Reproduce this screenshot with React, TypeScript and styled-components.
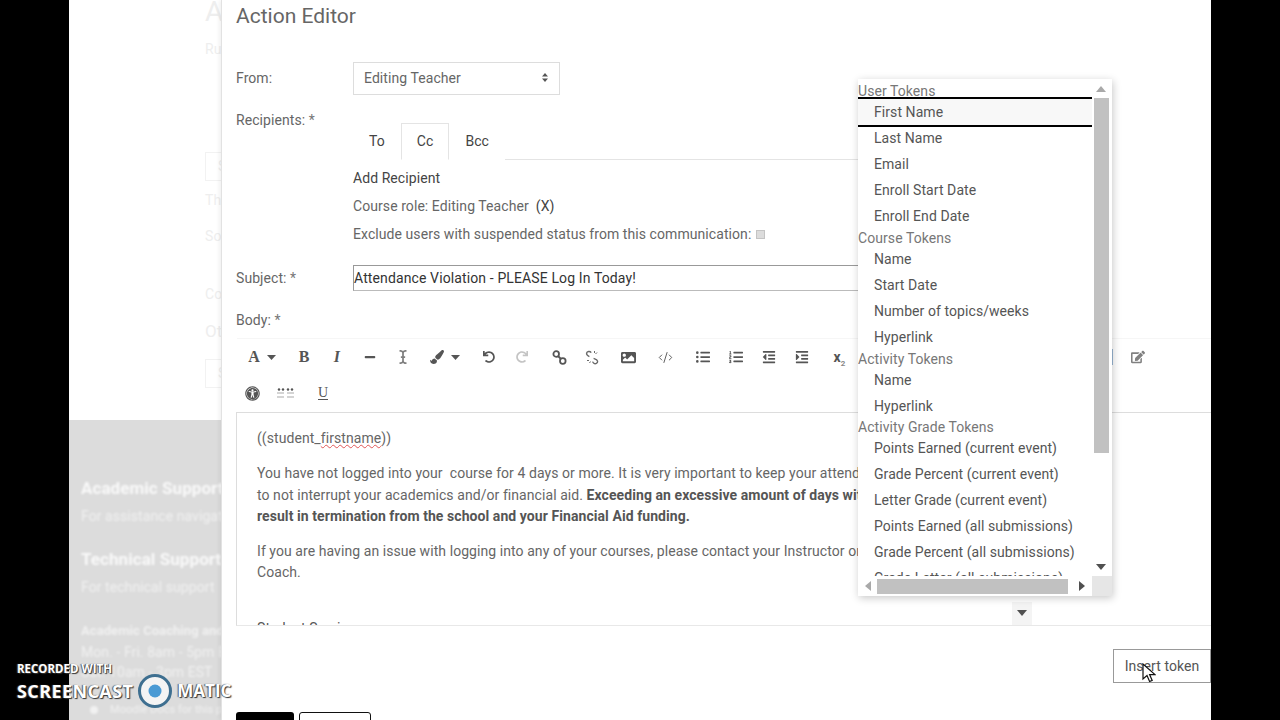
import React, { FC, ReactNode } from 'react';
import styled, { createGlobalStyle } from 'styled-components';
import {
  FaEdit,
  FaImage,
  FaIndent,
  FaListOl,
  FaListUl,
  FaMinus,
  FaOutdent,
  FaPaintBrush,
  FaRedo,
  FaUndo,
  FaUniversalAccess,
  FaICursor,
} from 'react-icons/fa';
import { CodeXml } from 'lucide-react';

type TokenGroup = {
  title: string;
  items: string[];
};

const tokenGroups: TokenGroup[] = [
  {
    title: 'User Tokens',
    items: ['First Name', 'Last Name', 'Email', 'Enroll Start Date', 'Enroll End Date'],
  },
  {
    title: 'Course Tokens',
    items: ['Name', 'Start Date', 'Number of topics/weeks', 'Hyperlink'],
  },
  { title: 'Activity Tokens', items: ['Name', 'Hyperlink'] },
  {
    title: 'Activity Grade Tokens',
    items: [
      'Points Earned (current event)',
      'Grade Percent (current event)',
      'Letter Grade (current event)',
      'Points Earned (all submissions)',
      'Grade Percent (all submissions)',
      'Grade Letter (all submissions)',
    ],
  },
];

const Caret: FC = () => (
  <svg width='9' height='5' viewBox='0 0 9 5'>
    <path d='M0 0h9L4.5 5z' fill='currentColor' />
  </svg>
);

const Arrow: FC<{ dir: 'up' | 'down' | 'left' | 'right'; color?: string }> = ({
  dir,
  color = '#505050',
}) => {
  const paths = {
    up: 'M5 2l5 6H0z',
    down: 'M0 2h10L5 8z',
    left: 'M8 0v10L2 5z',
    right: 'M2 0v10l6-5z',
  };
  return (
    <svg width='10' height='10' viewBox='0 0 10 10'>
      <path d={paths[dir]} fill={color} />
    </svg>
  );
};

// the "show more" grid button, dark dots over two faded columns
const DotsIcon: FC = () => (
  <svg width='17' height='11' viewBox='0 0 17 11'>
    <g fill='#555'>
      <circle cx='2' cy='1.5' r='1.2' />
      <circle cx='6' cy='1.5' r='1.2' />
      <circle cx='11' cy='1.5' r='1.2' />
      <circle cx='15' cy='1.5' r='1.2' />
    </g>
    <g fill='#d4d4d4'>
      <rect x='0' y='4' width='7' height='2' />
      <rect x='0' y='8' width='7' height='2' />
      <rect x='10' y='4' width='7' height='2' />
      <rect x='10' y='8' width='7' height='2' />
    </g>
  </svg>
);

const LinkIcon: FC = () => (
  <svg width='15' height='15' viewBox='0 0 15 15' fill='none' stroke='currentColor' strokeWidth='1.8'>
    <circle cx='4.2' cy='4' r='2.8' />
    <circle cx='10.8' cy='11' r='2.8' />
    <path d='M6 6l3 3' />
  </svg>
);

const UnlinkIcon: FC = () => (
  <svg width='15' height='15' viewBox='0 0 15 15' fill='none' stroke='#6a6a6a' strokeWidth='1.4'>
    <path d='M6.2 2.6C5 .8 2 1.2 1.6 3.2 1.3 5 3 6 4.4 6.6' />
    <path d='M8.6 8.4c1.4.5 3.6 1 4 2.8.3 2-2.2 3.2-3.8 2-.6-.4-1-1-1.2-1.6' />
    <path d='M9.5 1v2M12 2.5l-1.5 1.5M2 10.5h2M4.5 13l1-1.5' strokeWidth='1' />
  </svg>
);

const Tool: FC<{ wide?: boolean; children: ReactNode }> = ({ wide, children }) => (
  <ToolButton $wide={wide}>{children}</ToolButton>
);

const Toolbar: FC = () => (
  <ToolbarWrap>
    <ToolRow>
      <ToolGroup>
        <Tool wide>
          <SerifGlyph>A</SerifGlyph>
          <Caret />
        </Tool>
      </ToolGroup>
      <ToolGroup>
        <Tool>
          <SerifGlyph>B</SerifGlyph>
        </Tool>
        <Tool>
          <SerifGlyph $italic>I</SerifGlyph>
        </Tool>
        <Tool>
          <FaMinus size={12} />
        </Tool>
        <Tool>
          <MutedIcon>
            <FaICursor size={14} />
          </MutedIcon>
        </Tool>
      </ToolGroup>
      <ToolGroup>
        <Tool wide>
          <FaPaintBrush size={14} />
          <Caret />
        </Tool>
      </ToolGroup>
      <ToolGroup $nudge={2}>
        <Tool>
          <FaUndo size={12} />
        </Tool>
        <Tool>
          <FaintIcon>
            <FaRedo size={12} />
          </FaintIcon>
        </Tool>
      </ToolGroup>
      <ToolGroup>
        <Tool>
          <LinkIcon />
        </Tool>
        <Tool>
          <UnlinkIcon />
        </Tool>
      </ToolGroup>
      <ToolGroup $nudge={-2}>
        <Tool>
          <FaImage size={15} />
        </Tool>
      </ToolGroup>
      <ToolGroup>
        <Tool>
          <CodeXml size={15} strokeWidth={1.5} />
        </Tool>
      </ToolGroup>
      <ToolGroup>
        <Tool>
          <FaListUl size={14} />
        </Tool>
        <Tool>
          <FaListOl size={14} />
        </Tool>
        <Tool>
          <FaOutdent size={14} />
        </Tool>
        <Tool>
          <FaIndent size={14} />
        </Tool>
      </ToolGroup>
      <ToolGroup>
        <Tool>
          <SubGlyph>
            x<sub>2</sub>
          </SubGlyph>
        </Tool>
      </ToolGroup>
      <EndGroup>
        <BlueBar />
        <Tool>
          <MutedIcon>
            <FaEdit size={14} />
          </MutedIcon>
        </Tool>
      </EndGroup>
    </ToolRow>
    <SecondToolRow>
      <ToolGroup>
        <Tool>
          <FaUniversalAccess size={15} />
        </Tool>
        <Tool>
          <DotsIcon />
        </Tool>
      </ToolGroup>
      <ToolGroup>
        <Tool>
          <UnderlinedGlyph>U</UnderlinedGlyph>
        </Tool>
      </ToolGroup>
    </SecondToolRow>
  </ToolbarWrap>
);

const TokenMenu: FC = () => (
  <Menu>
    <MenuList>
      {tokenGroups.map((group) => (
        <TokenSection key={group.title}>
          <GroupTitle>{group.title}</GroupTitle>
          {group.items.map((item) => (
            <TokenItem key={item} $selected={item === 'First Name'}>
              {item}
            </TokenItem>
          ))}
        </TokenSection>
      ))}
    </MenuList>
    <VerticalBar>
      <BarButton>
        <Arrow dir='up' color='#a9a9a9' />
      </BarButton>
      <VerticalThumb />
      <BarSpacer />
      <BarButton>
        <Arrow dir='down' />
      </BarButton>
    </VerticalBar>
    <HorizontalBar>
      <BarButton>
        <Arrow dir='left' color='#a9a9a9' />
      </BarButton>
      <HorizontalThumb />
      <BarButton>
        <Arrow dir='right' />
      </BarButton>
    </HorizontalBar>
    <BarCorner />
  </Menu>
);

const Backdrop: FC = () => (
  <BackdropColumn>
    <BackdropPage>
      <GhostHeading>Action Rules</GhostHeading>
      <GhostText $top={13}>Rule settings</GhostText>
      <GhostBox $top={93}>Select</GhostBox>
      <GhostText $top={9}>This rule</GhostText>
      <GhostText $top={16}>Sort</GhostText>
      <GhostText $top={38}>Course</GhostText>
      <GhostText $top={17} $large>Other</GhostText>
      <GhostBox $top={18}>Save</GhostBox>
    </BackdropPage>
    <Footer>
      <FooterInner>
        <FooterHeading>Academic Support</FooterHeading>
        <FooterText $top={10}>For assistance navigating</FooterText>
        <FooterHeading $top={24}>Technical Support</FooterHeading>
        <FooterText $top={10}>For technical support</FooterText>
        <FooterSub>Academic Coaching and</FooterSub>
        <FooterText $top={5}>Mon. - Fri. 8am - 5pm EST</FooterText>
        <FooterText $top={3}>Sat. 10am - 3pm EST</FooterText>
        <FooterDocs>Moodle Docs for this page</FooterDocs>
      </FooterInner>
    </Footer>
  </BackdropColumn>
);

const App: FC = () => {
  return (
    <>
      <GlobalStyle />
      <Stage>
        <Backdrop />
        <Modal>
          <Title>Action Editor</Title>
          <FromRow>
            <FieldLabel $tall>From:</FieldLabel>
            <SelectBox>
              Editing Teacher
              <svg width='6' height='9' viewBox='0 0 6 9'>
                <path d='M3 0l3 3.5H0zM3 9L0 5.5h6z' fill='#555' />
              </svg>
            </SelectBox>
          </FromRow>
          <RecipientsRow>
            <FieldLabel>
              Recipients: <Req>*</Req>
            </FieldLabel>
            <div>
              <Tabs>
                <TabItem>To</TabItem>
                <TabItem $active>Cc</TabItem>
                <TabItem>Bcc</TabItem>
              </Tabs>
              <AddRecipient>Add Recipient</AddRecipient>
              <RecipientLine>
                Course role: Editing Teacher&nbsp; <RemoveMark>(X)</RemoveMark>
              </RecipientLine>
              <RecipientLine>
                Exclude users with suspended status from this communication: <TinyCheck />
              </RecipientLine>
            </div>
          </RecipientsRow>
          <SubjectRow>
            <FieldLabel $input>
              Subject: <Req>*</Req>
            </FieldLabel>
            <SubjectInput>Attendance Violation - PLEASE Log In Today!</SubjectInput>
          </SubjectRow>
          <BodyLabel>
            Body: <Req>*</Req>
          </BodyLabel>
          <Toolbar />
          <Editor>
            <EditorText>
              <p>
                ((student_<Misspelled>firstname</Misspelled>))
              </p>
              <p>
                You have not logged into your&nbsp; course for 4 days or more. It is very important to keep your attendance up
                <br />
                to not interrupt your academics and/or financial aid. <strong>Exceeding an excessive amount of days without</strong>
                <br />
                <strong>result in termination from the school and your Financial Aid funding.</strong>
              </p>
              <p>
                If you are having an issue with logging into any of your courses, please contact your Instructor or
                <br />
                Coach.
              </p>
              <ClippedLine>Student Services</ClippedLine>
            </EditorText>
            <EditorScroll>
              <Arrow dir='down' />
            </EditorScroll>
          </Editor>
          <InsertRow>
            <InsertButton>Insert token</InsertButton>
          </InsertRow>
          <ActionRow>
            <SaveButton>Save</SaveButton>
            <CancelButton>Cancel</CancelButton>
          </ActionRow>
          <TokenMenu />
        </Modal>
        <Pointer viewBox='0 0 14 20' width='14' height='20'>
          <path d='M1 1v15l4-3.5 2.6 6 2.6-1.1-2.6-5.8H13z' fill='#fff' stroke='#111' strokeWidth='1.2' />
        </Pointer>
        <Watermark>
          <RecordedWith>RECORDED WITH</RecordedWith>
          <Brand>
            SCREENCAST
            <svg width='36' height='36' viewBox='0 0 36 36'>
              <circle cx='18' cy='18' r='15.5' fill='#f4f4f4' stroke='#3e6f90' strokeWidth='3' />
              <circle cx='18' cy='18' r='6.5' fill='#4a9ad4' />
            </svg>
            <BrandEnd>MATIC</BrandEnd>
          </Brand>
        </Watermark>
      </Stage>
    </>
  );
};

const GlobalStyle = createGlobalStyle`
  html, body {
    margin: 0;
    height: 720px;
    overflow: hidden;
    background: #000;
    font-family: Roboto, 'Liberation Sans', sans-serif;
    font-size: 14px;
    letter-spacing: 0.07px;
    color: #666;
  }
`;

const Stage = styled.div`
  position: relative;
  display: flex;
  width: 1142px;
  height: 720px;
  margin-left: 69px;
  overflow: visible;
`;

const BackdropColumn = styled.aside`
  display: flex;
  flex-direction: column;
  width: 152px;
  height: 720px;
  overflow: hidden;
  white-space: nowrap;
`;

const BackdropPage = styled.div`
  display: flex;
  flex-direction: column;
  align-items: flex-start;
  height: 420px;
  padding-left: 136px;
  box-sizing: border-box;
  background: #fff;
  color: #eee;
`;

const GhostHeading = styled.div`
  margin-top: -2px;
  font-size: 28px;
  line-height: 28px;
`;

const GhostText = styled.div<{ $top: number; $large?: boolean }>`
  margin-top: ${(p) => p.$top}px;
  font-size: ${(p) => (p.$large ? 17 : 14)}px;
  line-height: 20px;
`;

const GhostBox = styled.div<{ $top: number }>`
  margin-top: ${(p) => p.$top}px;
  width: 80px;
  height: 29px;
  padding-left: 12px;
  border: 1px solid #f2f2f2;
  line-height: 27px;
  box-sizing: border-box;
`;

const Footer = styled.div`
  flex: 1;
  background: #dcdcdc;
  overflow: hidden;
`;

const FooterInner = styled.div`
  padding: 58px 0 0 12px;
  color: rgba(255, 255, 255, 0.6);
  filter: blur(0.8px);
`;

const FooterHeading = styled.div<{ $top?: number }>`
  margin-top: ${(p) => p.$top ?? 0}px;
  font-size: 17px;
  font-weight: 700;
  line-height: 20px;
  color: rgba(255, 255, 255, 0.85);
`;

const FooterText = styled.div<{ $top: number }>`
  margin-top: ${(p) => p.$top}px;
  font-size: 14px;
  line-height: 17px;
`;

const FooterSub = styled.div`
  margin-top: 26px;
  font-size: 13px;
  font-weight: 700;
  line-height: 17px;
`;

const FooterDocs = styled.div`
  position: relative;
  margin-top: 22px;
  padding-left: 29px;
  font-size: 11px;
  line-height: 14px;

  &::before {
    content: '';
    position: absolute;
    left: 9px;
    top: 3px;
    width: 8px;
    height: 8px;
    border-radius: 50%;
    background: rgba(255, 255, 255, 0.6);
  }
`;

const Modal = styled.main`
  position: relative;
  width: 990px;
  height: 720px;
  padding-left: 15px;
  box-sizing: border-box;
  background: #fff;
  border-left: 1px solid #e2e2e2;
  box-shadow: -2px 0 4px rgba(0, 0, 0, 0.06);
  overflow: hidden;
`;

const Title = styled.h1`
  margin: 0;
  margin-left: -1px;
  font-size: 21px;
  font-weight: 400;
  letter-spacing: 0;
  line-height: 32px;
  color: #666;
`;

const FieldRow = styled.div`
  display: grid;
  grid-template-columns: 116px 1fr;
`;

const FromRow = styled(FieldRow)`
  margin-top: 30px;
`;

const RecipientsRow = styled(FieldRow)`
  margin-top: 15px;
`;

const SubjectRow = styled(FieldRow)`
  margin-top: 21px;
`;

const FieldLabel = styled.label<{ $tall?: boolean; $input?: boolean }>`
  margin-left: -1px;
  line-height: ${(p) => (p.$tall ? 33 : p.$input ? 26 : 20)}px;
`;

const Req = styled.span`
  color: #777;
`;

const SelectBox = styled.div`
  display: flex;
  align-items: center;
  justify-content: space-between;
  width: 207px;
  height: 33px;
  padding: 0 11px 2px 10px;
  box-sizing: border-box;
  border: 1px solid #ddd;
`;

const Tabs = styled.div`
  display: flex;
  margin-top: 13px;
  height: 37px;
  width: 540px;
  box-sizing: border-box;
  border-bottom: 1px solid #e4e4e4;
`;

const TabItem = styled.div<{ $active?: boolean }>`
  height: 37px;
  padding: 0 15px;
  box-sizing: border-box;
  line-height: 35px;
  color: #444;
  background: #fff;
  border: 1px solid ${(p) => (p.$active ? '#e4e4e4' : 'transparent')};
  border-bottom-color: ${(p) => (p.$active ? '#fff' : 'transparent')};
`;

const AddRecipient = styled.div`
  margin-top: 8px;
  line-height: 20px;
  color: #444;
`;

const RecipientLine = styled.div`
  margin-top: 8px;
  line-height: 20px;
`;

const RemoveMark = styled.span`
  color: #444;
`;

const TinyCheck = styled.span`
  display: inline-block;
  width: 7px;
  height: 7px;
  margin-left: 1px;
  border: 1px solid #c4c4c4;
  background: #dcdcdc;
`;

const SubjectInput = styled.div`
  width: 560px;
  height: 26px;
  box-sizing: border-box;
  border: 1px solid #999;
  border-bottom-color: #bbb;
  letter-spacing: 0.12px;
  line-height: 24px;
  color: #333;
  white-space: nowrap;
`;

const BodyLabel = styled(FieldLabel)`
  display: block;
  margin-top: 19px;
`;

const ToolbarWrap = styled.div`
  margin-top: 8px;
  border-top: 1px solid #f6f6f6;
`;

const ToolRow = styled.div`
  display: flex;
  align-items: center;
  gap: 4.5px;
  height: 36px;
  padding-left: 4px;
  color: #555;
`;

const SecondToolRow = styled(ToolRow)`
  margin-left: -1px;
  padding-left: 0;
`;

const ToolGroup = styled.div<{ $nudge?: number }>`
  display: flex;
  margin-left: ${(p) => p.$nudge ?? 0}px;
`;

const EndGroup = styled.div`
  display: flex;
  align-items: center;
  margin-left: auto;
  margin-right: 57px;
  gap: 8px;
`;

const BlueBar = styled.div`
  width: 1px;
  height: 16px;
  background: #9ab7d4;
`;

const ToolButton = styled.div<{ $wide?: boolean }>`
  display: flex;
  align-items: center;
  justify-content: center;
  gap: 7px;
  width: ${(p) => (p.$wide ? 42 : 33)}px;
  height: 24px;
`;

const SerifGlyph = styled.span<{ $italic?: boolean }>`
  font-family: 'Liberation Serif', serif;
  font-size: 16px;
  font-weight: 700;
  font-style: ${(p) => (p.$italic ? 'italic' : 'normal')};
  line-height: 16px;
`;

const UnderlinedGlyph = styled(SerifGlyph)`
  font-size: 14px;
  font-weight: 400;
  border-bottom: 1px solid #555;
  line-height: 13px;
`;

const SubGlyph = styled.span`
  font-size: 14px;
  font-weight: 700;
  line-height: 14px;

  sub {
    font-size: 8px;
    line-height: 0;
    color: #888;
  }
`;

const FaintIcon = styled.span`
  display: flex;
  color: #c4c4c4;
`;

const MutedIcon = styled.span`
  display: flex;
  color: #808080;
`;

const Editor = styled.div`
  display: flex;
  height: 214px;
  margin-top: 1px;
  margin-left: -1px;
  border-top: 1px solid #ddd;
  border-bottom: 1px solid #e8e8e8;
  border-left: 1px solid #ddd;
  box-sizing: border-box;
  overflow: hidden;
`;

const EditorText = styled.div`
  width: 775px;
  padding: 15px 0 0 20px;
  box-sizing: border-box;
  white-space: nowrap;
  overflow: hidden;
  line-height: 21.3px;

  p {
    margin: 0 0 14px;
  }

  strong {
    color: #555;
  }
`;

const Misspelled = styled.span`
  text-decoration: underline wavy #e05555 1px;
`;

const ClippedLine = styled.div`
  margin-top: 34px;
  color: #555;
`;

const EditorScroll = styled.div`
  display: flex;
  align-items: flex-end;
  justify-content: center;
  width: 20px;
  padding: 0 0 7px;
  margin-top: 189px;
  box-sizing: border-box;
  background: #f4f4f4;
`;

const InsertRow = styled.div`
  display: flex;
  justify-content: flex-end;
  margin-top: 23px;
`;

const InsertButton = styled.div`
  width: 98px;
  height: 34px;
  box-sizing: border-box;
  border: 1px solid #999;
  background: #fff;
  line-height: 32px;
  text-align: center;
  color: #555;
`;

const ActionRow = styled.div`
  display: flex;
  gap: 5px;
  margin-top: 29px;
  margin-left: -1px;
`;

const SaveButton = styled.div`
  width: 58px;
  height: 36px;
  padding-top: 9px;
  box-sizing: border-box;
  border-radius: 3px;
  background: #000;
  color: #fff;
  text-align: center;
`;

const CancelButton = styled.div`
  width: 72px;
  height: 36px;
  padding-top: 8px;
  box-sizing: border-box;
  border: 1px solid #111;
  border-radius: 3px;
  color: #333;
  text-align: center;
`;

const Menu = styled.div`
  position: absolute;
  left: 636px;
  top: 79px;
  display: grid;
  grid-template-columns: 234px 20px;
  grid-template-rows: 497px 20px;
  width: 254px;
  height: 517px;
  background: #fff;
  box-shadow: 1px 2px 8px rgba(0, 0, 0, 0.22);
`;

const MenuList = styled.div`
  padding-top: 3px;
  overflow: hidden;
  white-space: nowrap;
`;

const TokenSection = styled.div`
  &:last-child {
    margin-top: -1px;
  }
`;

const GroupTitle = styled.div`
  height: 17px;
  line-height: 18px;
  color: #777;
`;

const TokenItem = styled.div<{ $selected?: boolean }>`
  height: 26px;
  padding-left: 16px;
  line-height: 26px;
  color: #555;
  background: ${(p) => (p.$selected ? '#f8f8f8' : 'transparent')};
  box-shadow: ${(p) => (p.$selected ? '0 -2px 0 #000, 0 2px 0 #000' : 'none')};
`;

const VerticalBar = styled.div`
  display: flex;
  flex-direction: column;
  align-items: center;
  padding-right: 2px;
`;

const BarButton = styled.div`
  display: flex;
  align-items: center;
  justify-content: center;
  flex: 0 0 19px;
  height: 19px;
`;

const VerticalThumb = styled.div`
  width: 15px;
  height: 355px;
  background: #c1c1c1;
`;

const BarSpacer = styled.div`
  flex: 1;
`;

const HorizontalBar = styled.div`
  display: flex;
  align-items: center;
  padding-right: 1px;
`;

const HorizontalThumb = styled.div`
  flex: 1;
  height: 15px;
  margin-right: 4px;
  background: #c1c1c1;
`;

const BarCorner = styled.div`
  background: #e6e6e6;
`;

const Pointer = styled.svg`
  position: absolute;
  left: 1073px;
  top: 663px;
`;

const Watermark = styled.div`
  position: absolute;
  left: -52px;
  top: 661px;
  color: #fff;
  font-family: 'Open Sans', sans-serif;
  font-weight: 700;
  white-space: nowrap;
  text-shadow: 1px 1px 1px #333, -1px 0 1px #555;
`;

const RecordedWith = styled.div`
  font-size: 11.5px;
  letter-spacing: 0;
  line-height: 16px;
`;

const Brand = styled.div`
  display: flex;
  align-items: center;
  gap: 4px;
  margin-top: -4px;
  font-size: 18px;
  line-height: 36px;
  letter-spacing: 0.4px;
`;

const BrandEnd = styled.span`
  font-size: 17px;
  letter-spacing: 0;
`;

export default App;
